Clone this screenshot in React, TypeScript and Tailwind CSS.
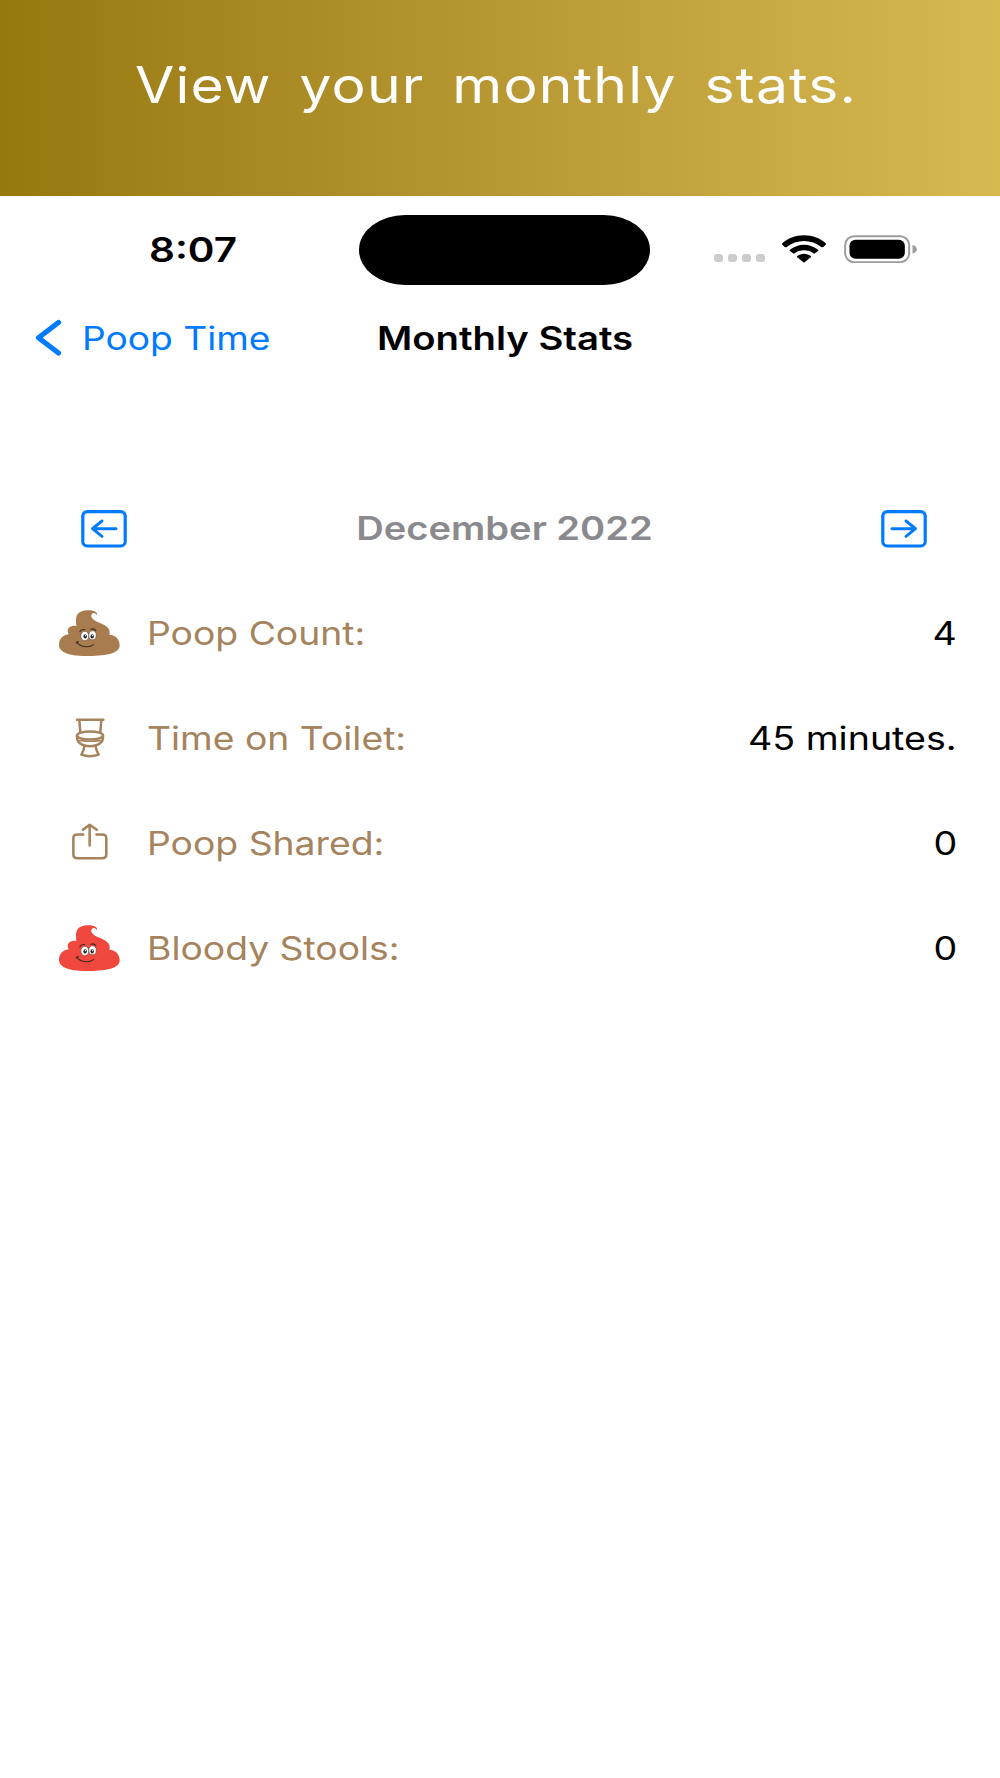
import type { ReactNode } from "react";

type PoopProps = {
  color: string;
};

const Poop = ({ color }: PoopProps) => {
  return (
    <svg viewBox="28 28 182 138" className="w-[61px] h-[46px]" preserveAspectRatio="none">
      <path
        className={color}
        d="M80 76C76 54 80 38 93 33C106 27 130 27 138 34C142 37 142 41 140 43C138 37 130 35 126 40C119 50 133 61 150 67C168 74 184 84 178 102C198 103 209 117 209 134C209 157 174 166 118 166C62 166 28 157 28 132C28 115 40 103 57 101C48 86 60 73 80 76Z"
      />
      <ellipse cx="105" cy="106" rx="12" ry="14" fill="#fff" stroke="#4a3322" strokeWidth="1.5" />
      <ellipse cx="128" cy="104" rx="11" ry="13.5" fill="#fff" stroke="#4a3322" strokeWidth="1.5" />
      <ellipse cx="106" cy="107" rx="5" ry="6.5" fill="#222" />
      <ellipse cx="127" cy="107" rx="5" ry="6.5" fill="#222" />
      <circle cx="107" cy="105" r="2" fill="#fff" />
      <circle cx="128" cy="105" r="2" fill="#fff" />
      <g fill="none" stroke="#3b2a1c" strokeWidth="3.2" strokeLinecap="round">
        <path d="M90 93Q95 84 105 87" />
        <path d="M123 86Q132 82 138 90" />
        <path d="M79 127L86 122M81 124C90 139 116 143 131 132" />
      </g>
    </svg>
  );
};

const Toilet = () => {
  return (
    <svg
      viewBox="75 54 90 119"
      className="w-[30px] h-10 ml-px"
      preserveAspectRatio="none"
      fill="none"
      stroke="#a5835c"
      strokeWidth="7.5"
      strokeLinecap="round"
      strokeLinejoin="round"
    >
      <path d="M81 59H160M88 60L91 97M154 60L151 97" />
      <ellipse cx="120" cy="106" rx="39" ry="12" />
      <path d="M81 107C79 127 96 138 120 138S161 127 159 107" />
      <path d="M89 121Q120 126 152 121" strokeWidth="4" />
      <path d="M103 138C102 150 98 154 94 163Q120 172 146 163C142 154 138 150 137 138" />
    </svg>
  );
};

const Share = () => {
  return (
    <svg
      viewBox="66 370 106 110"
      className="w-[36px] h-[37px] -mt-0.5"
      preserveAspectRatio="none"
      fill="none"
      stroke="#a5835c"
      strokeWidth="7.5"
      strokeLinecap="round"
      strokeLinejoin="round"
    >
      <path
        strokeLinecap="butt"
        d="M102 404H82Q70 404 70 415V464Q70 475 82 475H155Q167 475 167 464V415Q167 404 155 404H135"
      />
      <path d="M118 437V376M98 390L118 375L139 390" />
    </svg>
  );
};

const stats: { icon: ReactNode; label: string; value: string }[] = [
  { icon: <Poop color="fill-[#a97c50]" />, label: "Poop Count:", value: "4" },
  { icon: <Toilet />, label: "Time on Toilet:", value: "45 minutes." },
  { icon: <Share />, label: "Poop Shared:", value: "0" },
  { icon: <Poop color="fill-[#f0483e]" />, label: "Bloody Stools:", value: "0" },
];

const ArrowBox = ({ flip }: { flip?: boolean }) => {
  return (
    <button>
      <svg
        viewBox="0 0 46 38"
        className={flip ? "w-[46px] h-[38px] -scale-x-100" : "w-[46px] h-[38px]"}
        fill="none"
        stroke="#007aff"
        strokeLinecap="round"
        strokeLinejoin="round"
      >
        <rect x="1.8" y="1.6" width="42.4" height="34.4" rx="4.5" strokeWidth="3.2" />
        <path d="M11.5 18.7H35M21 11L11.5 18.7L21 26.4" strokeWidth="2.9" />
      </svg>
    </button>
  );
};

const StatusBar = () => {
  return (
    <div className="flex items-center h-[70px] mt-[19px]">
      <h2 className="w-[209.5px] ml-[149px] text-[34px] leading-none font-semibold">
        <span className="inline-block origin-left scale-x-[1.19]">8:07</span>
      </h2>
      <div className="w-[291.5px] h-[70px] rounded-[46px/35px] bg-black" />
      <div className="flex gap-[5px] ml-16 mt-4">
        <div className="w-[9px] h-2 rounded-[3px] bg-[#cccccc]" />
        <div className="w-[9px] h-2 rounded-[3px] bg-[#cccccc]" />
        <div className="w-[9px] h-2 rounded-[3px] bg-[#cccccc]" />
        <div className="w-[9px] h-2 rounded-[3px] bg-[#cccccc]" />
      </div>
      <svg viewBox="277 43 132 84" className="w-11 h-7 ml-[17px] -mt-[3px]">
        <path d="M343 44C370 44 392 53 408 68Q410 70 408 72L401 79Q398 81 395 79C380 67 362 61 343 61S306 67 291 79Q288 81 285 79L278 72Q276 70 278 68C294 53 316 44 343 44Z" />
        <path d="M343 72C359 72 374 78 385 87Q387 89 385 91L376 98Q374 100 371 98C364 92 354 89 343 89S322 92 315 98Q312 100 310 98L301 91Q299 89 301 87C312 78 327 72 343 72Z" />
        <path d="M343 99C351 99 358 102 363 106Q365 108 363 110L345 125Q343 126 341 125L323 110Q321 108 323 106C328 102 335 99 343 99Z" />
      </svg>
      <svg viewBox="462 43 218 84" className="w-[73px] h-7 ml-[17.5px] -mt-[3px]">
        <rect x="465" y="46.5" width="192" height="78" rx="27" fill="none" stroke="#9c9c9c" strokeWidth="6" />
        <rect x="478" y="57" width="166" height="57" rx="18" />
        <path d="M667 73C684 76 684 96 667 99Z" fill="#9c9c9c" />
      </svg>
    </div>
  );
};

const App = () => {
  return (
    <div className="w-[1000px] h-[1778px] overflow-hidden bg-white text-black font-['Inter',sans-serif] whitespace-nowrap">
      <div className="h-[196px] pt-[60px] pl-[135px] bg-linear-to-r from-[#97780d] to-[#d8b950]">
        <h1 className="inline-block origin-left scale-x-[1.14] text-[50px] leading-[50px] tracking-[1px] [word-spacing:9.5px] text-white">
          View your monthly stats.
        </h1>
      </div>

      <StatusBar />

      <div className="flex items-center h-10 mt-[33px] text-[32px]">
        <svg
          viewBox="0 0 27 38"
          className="w-[27px] h-[38px] ml-[35px]"
          fill="none"
          stroke="#007aff"
          strokeWidth="5.2"
          strokeLinecap="round"
          strokeLinejoin="round"
        >
          <path d="M23.5 3.5L3.5 18.7L23.5 34" />
        </svg>
        <a className="w-[295px] ml-5 pt-0.5 text-[#007aff]">
          <span className="inline-block origin-left scale-x-[1.16]">Poop Time</span>
        </a>
        <h2 className="pt-0.5 origin-left scale-x-[1.195] font-semibold">Monthly Stats</h2>
      </div>

      <div className="flex items-center justify-between h-[38px] mt-[152px] pl-[80.5px] pr-[72.5px]">
        <ArrowBox />
        <h2 className="origin-center scale-x-[1.19] text-[32px] font-semibold text-[#8a8a8e]">
          December 2022
        </h2>
        <ArrowBox flip />
      </div>

      <div className="mt-8">
        {stats.map((stat) => {
          return (
            <div key={stat.label} className="flex items-center h-[105px] pr-[43px] text-[32px]">
              <div className="flex justify-center w-[61px] ml-[59px]">{stat.icon}</div>
              <span className="ml-[27px] pt-0.5 origin-left scale-x-[1.165] text-[#a5835c]">{stat.label}</span>
              <span className="ml-auto pt-0.5 origin-right scale-x-[1.175]">{stat.value}</span>
            </div>
          );
        })}
      </div>
    </div>
  );
};

export default App;
